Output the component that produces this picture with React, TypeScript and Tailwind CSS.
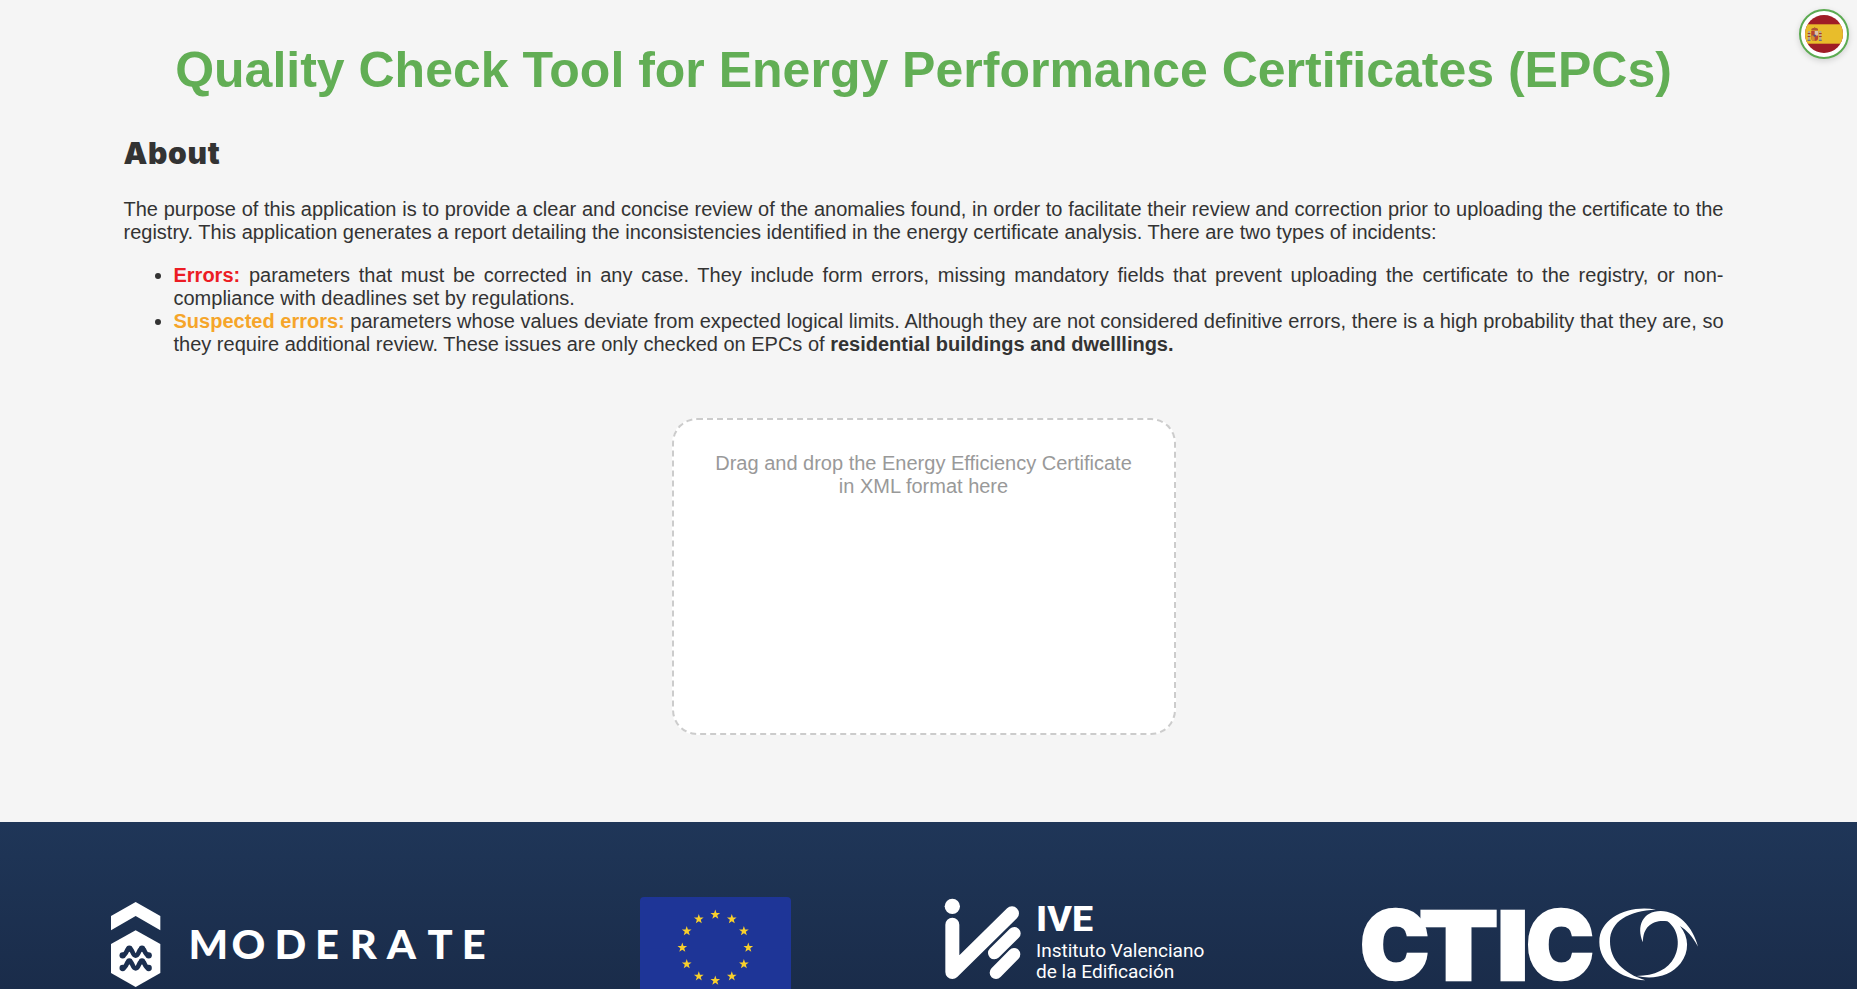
const STAR_ANGLES = [0, 30, 60, 90, 120, 150, 180, 210, 240, 270, 300, 330];

function starPoints(cx: number, cy: number, r: number) {
  return Array.from({ length: 10 }, (_, i) => {
    const radius = i % 2 === 0 ? r : r * 0.4;
    const a = (i * Math.PI) / 5;
    return `${(cx + radius * Math.sin(a)).toFixed(2)},${(cy - radius * Math.cos(a)).toFixed(2)}`;
  }).join(" ");
}

function SpainFlag() {
  return (
    <svg viewBox="0 0 38 38" className="size-full rounded-full">
      <rect width="38" height="38" fill="#9f1d26" />
      <rect y="9.3" width="38" height="19.4" fill="#e8bd2b" />
      <rect x="3" y="16" width="2" height="9" fill="#b9a98c" />
      <rect x="14.3" y="16" width="2" height="9" fill="#b9a98c" />
      <path d="M2.6 18.5h2.8M2.6 21.5h2.8M13.9 18.5h2.8M13.9 21.5h2.8" stroke="#a63a2c" strokeWidth="1.1" />
      <path d="M2.5 25.3h3M13.8 25.3h3" stroke="#6c7182" strokeWidth="1.3" />
      <path d="M6.2 16h7v6.5a3.5 3.5 0 0 1-7 0z" fill="#b84432" />
      <path d="M9.7 16h3.5v4.4H9.7z" fill="#d9c3ae" />
      <path d="M6.2 20.4h3.5V26a3.5 3.5 0 0 1-3.5-3.5z" fill="#d0912e" />
      <circle cx="9.7" cy="20.6" r="1.2" fill="#4a5385" />
      <path d="M6.5 15.5c-.8-2.2 1.2-2.4 3.2-2.4s4 .2 3.2 2.4z" fill="#ad5335" />
      <path d="M9.7 12v1.5" stroke="#b1762b" />
    </svg>
  );
}

function ModerateLogo() {
  return (
    <svg viewBox="63 51 1125 276" className="h-[92px] w-[375px] shrink-0 overflow-visible" fill="#fff">
      <path d="M63 108 137 66 211 108V151L137 108 63 151Z" />
      <path d="M63 192 137 151 211 192V279L137 321 63 279Z" />
      {[0, 38].map((dy) => (
        <g key={dy} transform={`translate(0 ${dy})`} fill="#1b2f50">
          <path
            d="M98 226C112 224 108 206 118 206S127 227 137 227 146 206 156 206 162 224 176 226"
            fill="none"
            stroke="#1b2f50"
            strokeWidth="14"
            strokeLinecap="round"
          />
          <circle cx="98" cy="226" r="9.5" />
          <circle cx="118" cy="206" r="9.5" />
          <circle cx="156" cy="206" r="9.5" />
          <circle cx="176" cy="226" r="9.5" />
        </g>
      ))}
      <text
        transform="scale(1.07 1)"
        x="276 397 517 631 728 832 946 1042"
        y="236"
        className="font-['Lato',sans-serif] font-black"
        fontSize="117"
      >
        MODERATE
      </text>
    </svg>
  );
}

function EuFlag() {
  return (
    <svg viewBox="0 0 151 101" className="h-[101px] w-[151px] shrink-0 rounded">
      <rect width="151" height="101" fill="#1e3597" />
      {STAR_ANGLES.map((deg) => {
        const a = (deg * Math.PI) / 180;
        return (
          <polygon
            key={deg}
            fill="#f8cf2c"
            points={starPoints(75.3 + 33 * Math.sin(a), 50.7 - 33 * Math.cos(a), 5.1)}
          />
        );
      })}
    </svg>
  );
}

function IveLogo() {
  return (
    <svg viewBox="42 51 783 276" className="h-[92px] w-[261px] shrink-0 overflow-visible" fill="#fff">
      <circle cx="67" cy="79" r="23" />
      <path d="M67 134V276L246 100" fill="none" stroke="#fff" strokeWidth="42" strokeLinecap="round" strokeLinejoin="round" />
      <path d="M193 219 253 160M198 278 252 223" stroke="#fff" strokeWidth="38" strokeLinecap="round" />
      <text x="318" y="153" className="font-['Roboto',sans-serif] font-extrabold" fontSize="105" textLength="171" lengthAdjust="spacingAndGlyphs">
        IVE
      </text>
      <g className="font-['Roboto',sans-serif]" fontSize="56">
        <text x="318" y="232" textLength="505" lengthAdjust="spacingAndGlyphs">
          Instituto Valenciano
        </text>
        <text x="318" y="293" textLength="415" lengthAdjust="spacingAndGlyphs">
          de la Edificación
        </text>
      </g>
    </svg>
  );
}

function CticLogo() {
  return (
    <svg viewBox="63 51 1014 276" className="h-[92px] w-[338px] shrink-0 overflow-visible" fill="#fff">
      <g className="font-['Inter',sans-serif] font-black" fontSize="286" stroke="#fff" strokeWidth="7" strokeLinejoin="miter">
        <text x="60" y="297" textLength="208" lengthAdjust="spacingAndGlyphs">C</text>
        <text x="236" y="299" textLength="239" lengthAdjust="spacingAndGlyphs">T</text>
        <text x="470" y="299" textLength="96" lengthAdjust="spacingAndGlyphs">I</text>
        <text x="558" y="297" textLength="204" lengthAdjust="spacingAndGlyphs">C</text>
      </g>
      <path d="M948 89C870 74 778 110 778 186 778 250 840 297 916 301 850 280 810 240 810 184 810 124 866 92 948 89Z" />
      <path d="M909 187C888 140 908 93 962 93 1014 94 1058 138 1074 200 1058 170 1040 150 1020 138 1048 172 1048 215 1022 250 992 288 940 300 890 288 944 288 985 268 1003 232 1024 192 1012 144 982 124 942 118 908 137 909 187Z" />
    </svg>
  );
}

export default function App() {
  return (
    <div className="relative flex h-[989px] flex-col overflow-hidden bg-[#f5f5f5] font-['Liberation_Sans',Arial,sans-serif] text-xl leading-[23px] text-[#333]">
      <button
        type="button"
        aria-label="Español"
        className="absolute top-[9px] right-2 size-[50px] rounded-full border-2 border-[#5cab52] bg-white p-1 shadow-[0_2px_6px_rgba(0,0,0,0.15)]"
      >
        <SpainFlag />
      </button>

      <main className="ml-[123.5px] flex h-[822px] w-[1600px] shrink-0 flex-col">
        <h1 className="mt-[41px] text-center text-[50px] leading-[58px] font-bold whitespace-nowrap text-[#62ae55]">
          Quality Check Tool for Energy Performance Certificates (EPCs)
        </h1>
        <h2 className="mt-[33px] h-[42px] font-['Inter',sans-serif] text-[30px] leading-[42px] font-black tracking-[0.7px]">
          About
        </h2>
        <p className="mt-6 text-justify">
          The purpose of this application is to provide a clear and concise review of the anomalies found, in order to
          facilitate their review and correction prior to uploading the certificate to the registry. This application
          generates a report detailing the inconsistencies identified in the energy certificate analysis. There are two
          types of incidents:
        </p>
        <ul className="mt-5 list-disc pl-[50px] text-justify">
          <li>
            <strong className="text-[#ec1c24]">Errors:</strong> parameters that must be corrected in any case. They
            include form errors, missing mandatory fields that prevent uploading the certificate to the registry, or
            non-compliance with deadlines set by regulations.
          </li>
          <li>
            <strong className="text-[#f5a52a]">Suspected errors:</strong> parameters whose values deviate from expected
            logical limits. Although they are not considered definitive errors, there is a high probability that they
            are, so they require additional review. These issues are only checked on EPCs of{" "}
            <strong>residential buildings and dwelllings.</strong>
          </li>
        </ul>
        <div className="mt-[62px] h-[317px] w-[504px] shrink-0 self-center rounded-[25px] border-2 border-dashed border-[#ccc] bg-white px-10 pt-8 text-center text-[#999]">
          Drag and drop the Energy Efficiency Certificate in XML format here
        </div>
      </main>

      <footer className="flex h-[167px] shrink-0 items-start overflow-hidden bg-linear-to-b from-[#1f3658] to-[#1a2c4a] pt-[75px] pl-[111px]">
        <ModerateLogo />
        <div className="ml-[154px] flex">
          <EuFlag />
        </div>
        <div className="ml-[153px] flex">
          <IveLogo />
        </div>
        <div className="ml-[156px] flex">
          <CticLogo />
        </div>
      </footer>
    </div>
  );
}
